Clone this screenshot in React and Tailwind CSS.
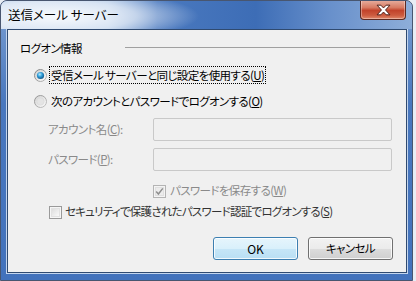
import React from "react";

function RadioOn() {
  return (
    <svg width="13" height="13" viewBox="0 0 13 13" className="shrink-0">
      <defs>
        <linearGradient id="ra-b" x1="0" y1="0" x2="1" y2="1">
          <stop offset="0" stopColor="#7d7d7d" />
          <stop offset="1" stopColor="#b9b9b9" />
        </linearGradient>
        <linearGradient id="ra-f" x1="0" y1="0" x2="1" y2="1">
          <stop offset="0" stopColor="#cfcfcf" />
          <stop offset="1" stopColor="#fdfdfd" />
        </linearGradient>
        <radialGradient id="ra-d" cx="0.4" cy="0.35" r="0.75">
          <stop offset="0" stopColor="#b5ecff" />
          <stop offset="0.45" stopColor="#2c9ad6" />
          <stop offset="1" stopColor="#0b4676" />
        </radialGradient>
      </defs>
      <circle cx="6.5" cy="6.5" r="6" fill="url(#ra-f)" stroke="url(#ra-b)" />
      <circle cx="6.5" cy="6.5" r="3.6" fill="url(#ra-d)" />
    </svg>
  );
}

function RadioOff() {
  return (
    <svg width="13" height="13" viewBox="0 0 13 13" className="shrink-0">
      <defs>
        <linearGradient id="rb-b" x1="0" y1="0" x2="1" y2="1">
          <stop offset="0" stopColor="#8e8e8e" />
          <stop offset="1" stopColor="#c4c4c4" />
        </linearGradient>
        <linearGradient id="rb-f" x1="0" y1="0" x2="1" y2="1">
          <stop offset="0" stopColor="#d2d2d2" />
          <stop offset="1" stopColor="#fbfbfb" />
        </linearGradient>
      </defs>
      <circle cx="6.5" cy="6.5" r="6" fill="url(#rb-f)" stroke="url(#rb-b)" />
      <circle cx="6.5" cy="6.5" r="3.6" fill="#e4e4e4" stroke="#d8d8d8" strokeWidth="0.6" />
    </svg>
  );
}

function CheckDisabled() {
  return (
    <svg width="13" height="13" viewBox="0 0 13 13" className="shrink-0">
      <rect x="0.5" y="0.5" width="12" height="12" fill="#f4f4f4" stroke="#b4b4b4" />
      <rect x="2.5" y="2.5" width="8" height="8" fill="#ececec" stroke="#e0e0e0" />
      <path d="M3.2 6.6 L5.4 9 L9.8 3.4" fill="none" stroke="#8e8e8e" strokeWidth="1.5" />
    </svg>
  );
}

function CheckOff() {
  return (
    <svg width="13" height="13" viewBox="0 0 13 13" className="shrink-0">
      <defs>
        <linearGradient id="cb-f" x1="0" y1="0" x2="1" y2="1">
          <stop offset="0" stopColor="#dcdcdc" />
          <stop offset="1" stopColor="#fbfbfb" />
        </linearGradient>
      </defs>
      <rect x="0.5" y="0.5" width="12" height="12" fill="#f6f6f6" stroke="#9a9a9a" />
      <rect x="2.5" y="2.5" width="8" height="8" fill="url(#cb-f)" stroke="#e2e2e2" />
    </svg>
  );
}

function CloseX() {
  return (
    <svg width="15" height="12" viewBox="0 0 14 11">
      <path
        d="M1 1 H4.5 L7 3.6 L9.5 1 H13 L8.9 5.5 L13 10 H9.5 L7 7.4 L4.5 10 H1 L5.1 5.5 Z"
        fill="#ffffff"
        stroke="#4b1d17"
        strokeWidth="0.9"
        strokeLinejoin="round"
      />
    </svg>
  );
}

export default function App() {
  return (
    <div className="w-[416px] h-[281px] bg-[#e8edf4] overflow-hidden font-['Noto_Sans_CJK_JP','Noto_Sans',sans-serif] [font-feature-settings:'palt'] text-[11.5px] tracking-[-0.6px] text-black">
      <div className="w-[413px] h-[281px] flex flex-col rounded-t-[7px] border border-[#485670] bg-[#4877be] shadow-[inset_0_0_0_1px_rgba(255,255,255,0.45)] overflow-hidden">
        {/* title bar */}
        <div className="h-[28px] shrink-0 flex items-start relative bg-[radial-gradient(140px_26px_at_58px_15px,rgba(255,255,255,0.92),rgba(255,255,255,0.6)_55%,rgba(255,255,255,0)),linear-gradient(to_right,#b3cbe9,#9dbbe2_26%,#4a79bf_38%,#3d6db6_62%,#6890cb_80%,#8eaed9)]">
          <span className="ml-[7px] mt-[5px] leading-[18px] text-[12.5px] tracking-normal">送信メール サーバー</span>
          <div className="absolute right-[6px] top-[-1px] w-[46px] h-[20px] rounded-b-[4px] border border-[#5d2a22] border-t-0 bg-[linear-gradient(to_bottom,#e8b1a2,#d77a62_40%,#c2432b_55%,#cc5a3e_80%,#e0886a)] shadow-[inset_0_0_0_1px_rgba(255,255,255,0.35)] flex items-center justify-center">
            <CloseX />
          </div>
        </div>
        {/* middle */}
        <div className="flex-1 flex pl-[6px] pr-[5px] pb-[7px] bg-[linear-gradient(to_bottom,#6d94cc,#4877be_30%,#4272bc)]">
          <div className="flex-1 bg-[#f0f0f0] border border-[#2f4a70] shadow-[0_0_0_1px_#c3d5ee] flex flex-col">
            {/* header */}
            <div className="mt-[9px] h-[18px] ml-[12px] flex items-center leading-[18px]">
              <span className="w-[105px]">ログオン情報</span>
              <div className="w-[265px] h-[2px] border-t border-[#a0a0a0] border-b-white" />
            </div>
            {/* radio 1 */}
            <div className="mt-[9px] h-[18px] ml-[26px] flex items-center leading-[16px]">
              <RadioOn />
              <span className="ml-[2px] h-[18px] px-[1px] border border-dotted border-black flex items-center">
                受信メール サーバーと同じ設定を使用する(<span className="underline">U</span>)
              </span>
            </div>
            {/* radio 2 */}
            <div className="mt-[8px] h-[18px] ml-[26px] flex items-center leading-[16px]">
              <RadioOff />
              <span className="ml-[3px] px-[1px]">
                次のアカウントとパスワードでログオンする(<span className="underline">O</span>)
              </span>
            </div>
            {/* account */}
            <div className="mt-[8px] h-[23px] ml-[40px] flex items-center text-[#8a8a8a]">
              <span className="w-[105px]">
                アカウント名(<span className="underline">C</span>):
              </span>
              <div className="w-[239px] h-[23px] border border-[#c9c9c9] rounded-[2px] bg-[#f0f0f0]" />
            </div>
            {/* password */}
            <div className="mt-[7px] h-[23px] ml-[40px] flex items-center text-[#8a8a8a]">
              <span className="w-[105px]">
                パスワード(<span className="underline">P</span>):
              </span>
              <div className="w-[239px] h-[23px] border border-[#c9c9c9] rounded-[2px] bg-[#f0f0f0]" />
            </div>
            {/* save password */}
            <div className="mt-[11px] h-[18px] ml-[145px] flex items-center text-[#8a8a8a]">
              <CheckDisabled />
              <span className="ml-[4px]">
                パスワードを保存する(<span className="underline">W</span>)
              </span>
            </div>
            {/* security */}
            <div className="mt-[3px] h-[18px] ml-[41px] flex items-center">
              <CheckOff />
              <span className="ml-[3px] text-[#333] tracking-[-0.75px]">
                セキュリティで保護されたパスワード認証でログオンする(<span className="underline">S</span>)
              </span>
            </div>
            {/* buttons */}
            <div className="mt-[16px] flex justify-end gap-[10px] pr-[13px]">
              <button className="w-[85px] h-[23px] rounded-[3px] border border-[#3c7fb1] bg-[linear-gradient(to_bottom,#e6f5fc,#d9f0fb_50%,#c6e6f7_50%,#b9dff4)] shadow-[inset_0_0_0_1px_rgba(255,255,255,0.8)] flex items-center justify-center text-[12px] tracking-normal">
                OK
              </button>
              <button className="w-[85px] h-[23px] rounded-[3px] border border-[#707070] bg-[linear-gradient(to_bottom,#f2f2f2,#ebebeb_50%,#dddddd_50%,#cfcfcf)] shadow-[inset_0_0_0_1px_rgba(255,255,255,0.8)] flex items-center justify-center">
                キャンセル
              </button>
            </div>
          </div>
        </div>
      </div>
    </div>
  );
}
